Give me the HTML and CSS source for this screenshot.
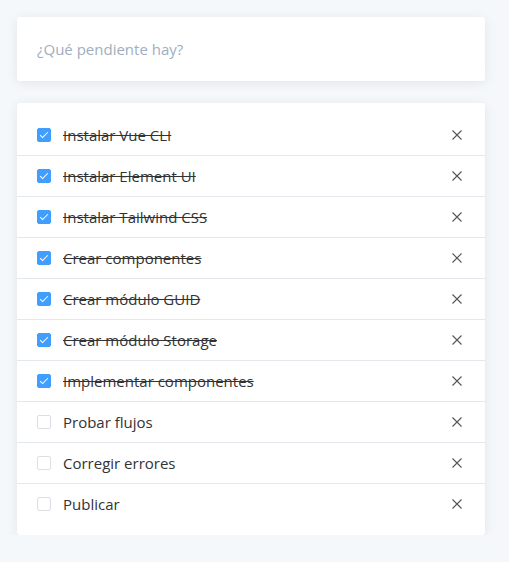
FILE: index.html
```html
<!DOCTYPE html>
<html lang="es">
<head>
<meta charset="utf-8">
<title>Pendientes</title>
<link rel="stylesheet" href="styles.css">
</head>
<body>
<main class="app">
  <section class="card input-card">
    <input class="new-todo" type="text" placeholder="¿Qué pendiente hay?">
  </section>
  <section class="card list-card">
    <ul class="todo-list">
      <li class="todo done"><span class="check"></span><span class="label">Instalar Vue CLI</span><span class="close"><svg viewBox="0 0 10 10"><path d="M0.5 0.5L9.5 9.5M9.5 0.5L0.5 9.5"/></svg></span></li>
      <li class="todo done"><span class="check"></span><span class="label">Instalar Element UI</span><span class="close"><svg viewBox="0 0 10 10"><path d="M0.5 0.5L9.5 9.5M9.5 0.5L0.5 9.5"/></svg></span></li>
      <li class="todo done"><span class="check"></span><span class="label">Instalar Tailwind CSS</span><span class="close"><svg viewBox="0 0 10 10"><path d="M0.5 0.5L9.5 9.5M9.5 0.5L0.5 9.5"/></svg></span></li>
      <li class="todo done"><span class="check"></span><span class="label">Crear componentes</span><span class="close"><svg viewBox="0 0 10 10"><path d="M0.5 0.5L9.5 9.5M9.5 0.5L0.5 9.5"/></svg></span></li>
      <li class="todo done"><span class="check"></span><span class="label">Crear módulo GUID</span><span class="close"><svg viewBox="0 0 10 10"><path d="M0.5 0.5L9.5 9.5M9.5 0.5L0.5 9.5"/></svg></span></li>
      <li class="todo done"><span class="check"></span><span class="label">Crear módulo Storage</span><span class="close"><svg viewBox="0 0 10 10"><path d="M0.5 0.5L9.5 9.5M9.5 0.5L0.5 9.5"/></svg></span></li>
      <li class="todo done"><span class="check"></span><span class="label">Implementar componentes</span><span class="close"><svg viewBox="0 0 10 10"><path d="M0.5 0.5L9.5 9.5M9.5 0.5L0.5 9.5"/></svg></span></li>
      <li class="todo"><span class="check"></span><span class="label">Probar flujos</span><span class="close"><svg viewBox="0 0 10 10"><path d="M0.5 0.5L9.5 9.5M9.5 0.5L0.5 9.5"/></svg></span></li>
      <li class="todo"><span class="check"></span><span class="label">Corregir errores</span><span class="close"><svg viewBox="0 0 10 10"><path d="M0.5 0.5L9.5 9.5M9.5 0.5L0.5 9.5"/></svg></span></li>
      <li class="todo"><span class="check"></span><span class="label">Publicar</span><span class="close"><svg viewBox="0 0 10 10"><path d="M0.5 0.5L9.5 9.5M9.5 0.5L0.5 9.5"/></svg></span></li>
    </ul>
  </section>
</main>
</body>
</html>
```
FILE: styles.css
```css
html, body {
  margin: 0;
  padding: 0;
  background: #f5f8fb;
  font-family: "Open Sans", "Noto Sans", sans-serif;
}
.app {
  width: 468px;
  padding: 17px 0 0 17px;
  display: flex;
  flex-direction: column;
  gap: 22px;
}
.card {
  background: #fff;
  border-radius: 3px;
  box-shadow: 0 2px 12px rgba(0, 0, 0, 0.08);
}
.input-card {
  height: 64px;
  display: flex;
  align-items: center;
  padding: 0 20px;
}
.new-todo {
  flex: 1;
  border: none;
  outline: none;
  background: transparent;
  font-family: inherit;
  font-size: 15px;
  color: #4a5568;
  padding: 0;
}
.new-todo::placeholder {
  color: #a0aec0;
}
.list-card {
  padding: 12px 0 11px;
}
.todo-list {
  list-style: none;
  margin: 0;
  padding: 0;
}
.todo {
  height: 40px;
  display: flex;
  align-items: center;
  padding: 0 20px;
  border-top: 1px solid #e4e8ed;
  font-size: 15px;
  color: #333;
}
.todo:first-child {
  border-top: none;
}
.check {
  width: 14px;
  height: 14px;
  box-sizing: border-box;
  border: 1px solid #dcdfe6;
  border-radius: 2px;
  background: #fff;
  position: relative;
  flex: none;
}
.done .check {
  background: #409eff;
  border-color: #409eff;
}
.done .check::after {
  content: "";
  position: absolute;
  left: 4px;
  top: 1px;
  width: 3px;
  height: 7px;
  border: 1px solid #fff;
  border-left: 0;
  border-top: 0;
  transform: rotate(45deg);
}
.label {
  flex: 1;
  margin-left: 12px;
}
.done .label {
  text-decoration: line-through;
}
.close {
  width: 16px;
  height: 16px;
  display: flex;
  align-items: center;
  justify-content: center;
}
.close svg {
  width: 10px;
  height: 10px;
  stroke: #555;
  stroke-width: 1.1;
  fill: none;
}
```
